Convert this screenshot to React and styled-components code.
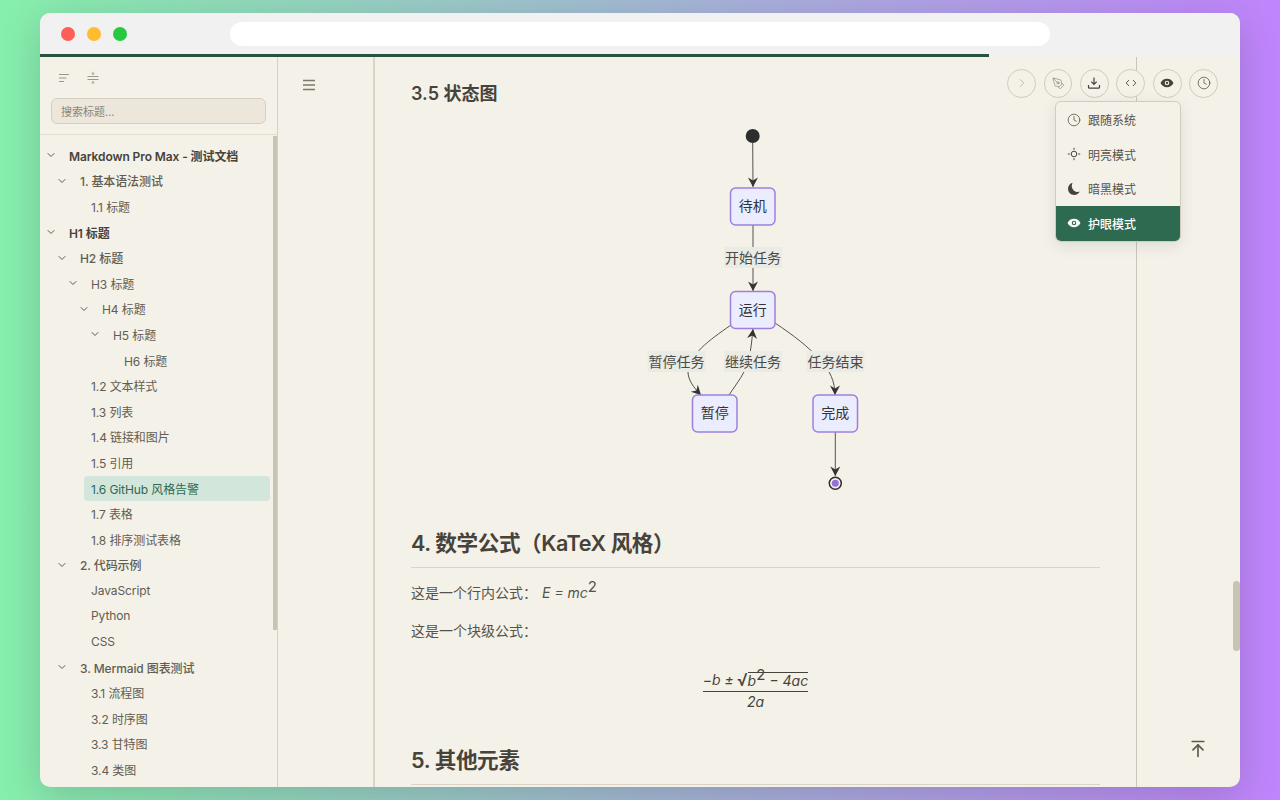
import React from 'react'
import styled, { createGlobalStyle } from 'styled-components'
import { ChevronRight, ChevronDown, Clock, PenTool, ArrowUpToLine } from 'lucide-react'

const FONT = `Inter, 'Noto Sans CJK SC', sans-serif`

const GlobalStyle = createGlobalStyle`
  html, body { margin: 0; height: 100%; overflow: hidden; }
  body {
    background: linear-gradient(90deg, #86efac 0%, #c084fc 100%);
    font-family: ${FONT};
  }
  * { box-sizing: border-box; }
`

const Page = styled.div`
  height: 100vh;
  padding: 13px 40px;
`

const Browser = styled.div`
  height: 774px;
  display: flex;
  flex-direction: column;
  position: relative;
  overflow: hidden;
  border-radius: 10px;
  background: #f4f1e8;
  box-shadow: 0 10px 40px rgba(0, 0, 0, 0.16);
`

const TitleBar = styled.div`
  height: 41px;
  flex-shrink: 0;
  display: flex;
  align-items: center;
  background: #f1f1f1;
  padding: 1px 190px 0 21px;
`

const Light = styled.span`
  width: 14px;
  height: 14px;
  border-radius: 50%;
  margin-right: 12px;
  background: ${(p) => p.$color};
`

const UrlBar = styled.div`
  flex: 1;
  height: 24px;
  margin-left: 91px;
  border-radius: 12px;
  background: #fff;
`

const ProgressTrack = styled.div`
  height: 3px;
  flex-shrink: 0;
  background: #f1f1ee;
`

const ProgressFill = styled.div`
  height: 100%;
  background: #27523e;
`

const Body = styled.div`
  flex: 1;
  min-height: 0;
  display: flex;
`

const Sidebar = styled.aside`
  width: 238px;
  flex-shrink: 0;
  display: flex;
  flex-direction: column;
  position: relative;
  border-right: 1px solid #d6d1c4;
`

const SidebarHead = styled.div`
  height: 78px;
  flex-shrink: 0;
  padding: 11px 11px 0;
  border-bottom: 1px solid #e2ddd0;
`

const SidebarTools = styled.div`
  display: flex;
  gap: 15px;
  padding-left: 6px;
  height: 20px;
  align-items: center;
  color: #9c978a;
`

const SearchBox = styled.div`
  width: 215px;
  height: 26px;
  margin-top: 10px;
  padding: 0 9px;
  display: flex;
  align-items: center;
  font-size: 11px;
  color: #8b8577;
  background: #ede6da;
  border: 1px solid #d5cfc0;
  border-radius: 6px;
`

const Tree = styled.div`
  flex: 1;
  min-height: 0;
  overflow: hidden;
  padding: 7.5px 7px 0 2px;
`

const SideThumb = styled.div`
  position: absolute;
  top: 79px;
  right: 0;
  width: 4px;
  height: 494px;
  background: #c9c3b4;
`

const Row = styled.div`
  height: 25.6px;
  display: flex;
  align-items: center;
  padding-left: ${(p) => p.$level * 11}px;
`

const Caret = styled.span`
  width: 18px;
  margin-right: 2px;
  flex-shrink: 0;
  display: flex;
  justify-content: center;
  color: #5e594d;
`

const RowLabel = styled.div`
  flex: 1;
  height: 25px;
  padding-left: 7px;
  display: flex;
  align-items: center;
  font-size: 12px;
  letter-spacing: -0.1px;
  white-space: nowrap;
  border-radius: 4px;
  font-weight: ${(p) => p.$weight};
  color: ${(p) => (p.$active ? '#2d6a4f' : p.$weight === 600 ? '#47433a' : '#625d51')};
  background: ${(p) => (p.$active ? '#d3e6dc' : 'transparent')};
`

const Gutter = styled.div`
  width: 97px;
  flex-shrink: 0;
  padding: 20px 0 0 23px;
  color: #7c786c;
  border-right: 2px solid #d9d4c7;
`

const Article = styled.main`
  width: 762px;
  flex-shrink: 0;
  padding: 0 36px;
  overflow: hidden;
  color: #47433a;
  border-right: 1px solid #c9c5b8;
`

const H3 = styled.h3`
  margin: 24px 0 0;
  font-size: 18px;
  line-height: 25px;
  font-weight: 600;
  color: #47433a;
`

const Diagram = styled.svg`
  display: block;
  margin-top: 14px;
`

const H2 = styled.h2`
  margin: ${(p) => p.$top}px 0 0;
  padding-bottom: 8px;
  font-size: 21.6px;
  letter-spacing: -0.4px;
  line-height: 31px;
  font-weight: 600;
  color: #47433a;
  border-bottom: 1px solid #d9d4c7;
`

const Para = styled.p`
  margin: ${(p) => p.$top}px 0 0;
  font-size: 14px;
  line-height: 24px;
  color: #57534a;
`

const InlineMath = styled.span`
  margin-left: 5px;
  font-style: italic;
  font-size: 14px;
`

const MathText = styled.span`
  font-style: italic;
  font-size: 14px;
`

const Radical = styled.span`
  font-size: 17px;
  line-height: 18px;
  margin-left: 3px;
`

const Sup = styled.sup`
  font-style: normal;
  font-size: 15px;
  line-height: 0;
  vertical-align: 6px;
`

const BlockMath = styled.div`
  margin-top: 28px;
  display: flex;
  justify-content: center;
`

const Fraction = styled.div`
  display: inline-flex;
  flex-direction: column;
  align-items: center;
  font-size: 14px;
  line-height: 18px;
  color: #47433a;
`

const Numerator = styled.div`
  display: flex;
  align-items: flex-end;
  white-space: nowrap;
  padding-bottom: 2px;
  border-bottom: 1px solid #47433a;
`

const Radicand = styled.span`
  border-top: 1px solid #47433a;
  line-height: 16px;
  font-style: italic;
`

const Denominator = styled.div`
  font-style: italic;
  padding-top: 1px;
`

const Toolbar = styled.div`
  position: absolute;
  top: 56px;
  right: 22px;
  display: flex;
  gap: 7.6px;
`

const RoundButton = styled.div`
  width: 28.8px;
  height: 28.8px;
  display: flex;
  align-items: center;
  justify-content: center;
  border-radius: 50%;
  background: #f4f1e8;
  border: 1px solid #d0cbbd;
  color: ${(p) => p.$color || '#47433a'};
`

const ThemeMenu = styled.div`
  position: absolute;
  top: 88.4px;
  right: 59px;
  width: 126px;
  overflow: hidden;
  background: #f4f1e8;
  border: 1px solid #d0cbbd;
  border-radius: 6px;
  box-shadow: 0 4px 16px rgba(0, 0, 0, 0.09);
`

const MenuItem = styled.div`
  height: 34.6px;
  display: flex;
  align-items: center;
  gap: 7px;
  padding-left: 11px;
  font-size: 12px;
  color: ${(p) => (p.$active ? '#fff' : '#57534a')};
  font-weight: ${(p) => (p.$active ? 500 : 400)};
  background: ${(p) => (p.$active ? '#2d6a4f' : 'transparent')};
`

const MenuIcon = styled.span`
  width: 14px;
  height: 14px;
  display: flex;
  align-items: center;
  justify-content: center;
  color: ${(p) => (p.$active ? '#fff' : '#47433a')};
`

const PageThumb = styled.div`
  position: absolute;
  top: 568px;
  right: 0;
  width: 7px;
  height: 70px;
  border-radius: 4px;
  background: #c9c3b4;
`

const BackTop = styled.div`
  position: absolute;
  right: 32px;
  bottom: 28px;
  color: #5e594d;
  display: flex;
`

const TREE = [
  [0, 'Markdown Pro Max - 测试文档', 1, 600],
  [1, '1. 基本语法测试', 1, 500],
  [2, '1.1 标题', 0, 400],
  [0, 'H1 标题', 1, 600],
  [1, 'H2 标题', 1, 500],
  [2, 'H3 标题', 1, 400],
  [3, 'H4 标题', 1, 400],
  [4, 'H5 标题', 1, 400],
  [5, 'H6 标题', 0, 400],
  [2, '1.2 文本样式', 0, 400],
  [2, '1.3 列表', 0, 400],
  [2, '1.4 链接和图片', 0, 400],
  [2, '1.5 引用', 0, 400],
  [2, '1.6 GitHub 风格告警', 0, 400, true],
  [2, '1.7 表格', 0, 400],
  [2, '1.8 排序测试表格', 0, 400],
  [1, '2. 代码示例', 1, 500],
  [2, 'JavaScript', 0, 400],
  [2, 'Python', 0, 400],
  [2, 'CSS', 0, 400],
  [1, '3. Mermaid 图表测试', 1, 500],
  [2, '3.1 流程图', 0, 400],
  [2, '3.2 时序图', 0, 400],
  [2, '3.3 甘特图', 0, 400],
  [2, '3.4 类图', 0, 400],
]

const CollapseIcon = () => (
  <svg width="14" height="14" viewBox="0 0 14 14" fill="none" stroke="currentColor" strokeWidth="1">
    <path d="M2 3.5h10M2 7h7.5M2 10.5h5" />
  </svg>
)

const ExpandIcon = () => (
  <svg width="14" height="14" viewBox="0 0 14 14" fill="none" stroke="currentColor" strokeWidth="1">
    <path d="M1.5 5.5h11M1.5 8.5h11" />
    <path d="M7 .8v2.6M5.6 2.4 7 3.6l1.4-1.2M7 13.2v-2.6M5.6 11.6 7 10.4l1.4 1.2" strokeWidth=".9" />
  </svg>
)

const DownloadIcon = () => (
  <svg width="14" height="14" viewBox="0 0 14 14" fill="none" stroke="currentColor" strokeWidth="1.2">
    <path d="M7 1.5v6.6M4.3 5.6 7 8.3l2.7-2.7M1.5 9v2.2c0 .6.4 1 1 1h9c.6 0 1-.4 1-1V9" />
  </svg>
)

const CodeIcon = () => (
  <svg width="12" height="12" viewBox="0 0 12 12" fill="none" stroke="currentColor" strokeWidth="1">
    <path d="M4 3 1.2 6 4 9M8 3l2.8 3L8 9" />
  </svg>
)

const EyeIcon = ({ size = 14 }) => (
  <svg width={size} height={size} viewBox="0 0 16 16" fill="currentColor">
    <path
      fillRule="evenodd"
      d="M.6 8C2 5 4.700 3.200 8 3.200S14 5 15.400 8C14 11 11.300 12.800 8 12.800S2 11 .6 8zM8 5.400a2.600 2.600 0 1 0 0 5.200 2.600 2.600 0 0 0 0-5.200z"
    />
    <circle cx="8" cy="8" r="1.300" />
  </svg>
)

const SunIcon = () => (
  <svg width="14" height="14" viewBox="0 0 14 14" fill="none" stroke="currentColor" strokeWidth="1">
    <circle cx="7" cy="7" r="2.800" />
    <path d="M7 .8v2M7 11.200v2M.8 7h2M11.200 7h2" />
  </svg>
)

const MoonIcon = () => (
  <svg width="14" height="14" viewBox="0 0 14 14" fill="currentColor">
    <path d="M5.600.8C2.900 1.500 1 3.900 1 6.800c0 3.400 2.800 6.200 6.200 6.200 2.400 0 4.500-1.400 5.500-3.400-.6.200-1.200.3-1.900.3-3.300 0-6-2.700-6-6 0-1.100.3-2.200.8-3.100z" />
  </svg>
)

const HamburgerIcon = () => (
  <svg width="16" height="16" viewBox="0 0 16 16" fill="none" stroke="currentColor" strokeWidth="1.400">
    <path d="M2 3.500h12M2 8h12M2 12.500h12" />
  </svg>
)

const StateNode = ({ x, y, label }) => (
  <g>
    <rect x={x} y={y} width="44.500" height="37" rx="5" fill="#ececff" stroke="#9d80dc" strokeWidth="1.500" />
    <text x={x + 22.25} y={y + 23} textAnchor="middle" fontSize="14" fill="#333">
      {label}
    </text>
  </g>
)

const EdgeLabel = ({ x, y, label }) => (
  <g>
    <rect x={x} y={y} width="58" height="21" fill="#ebebe5" />
    <text x={x + 29} y={y + 15.500} textAnchor="middle" fontSize="14" fill="#4a4a46">
      {label}
    </text>
  </g>
)

const StateDiagram = () => (
  <Diagram viewBox="411 120 689 380" width="689" height="380" fontFamily={FONT}>
    <defs>
      <marker id="tip" viewBox="0 0 12 12" refX="11" refY="6" markerWidth="12" markerHeight="12" orient="auto">
        <path d="M1.500 1 11 6 1.500 11 4.500 6z" fill="#333" />
      </marker>
    </defs>
    <g fill="none" stroke="#55534c" strokeWidth="1">
      <path d="M752.700 143 753 187" markerEnd="url(#tip)" />
      <path d="M753 225V291" markerEnd="url(#tip)" />
      <path d="M731 325C708 341 690 354 688 372c0 8 6 16 13 23" markerEnd="url(#tip)" />
      <path d="M729 395c8-12 17-23 20-36 2-10 3-20 4-30" markerEnd="url(#tip)" />
      <path d="M775 323c18 12 34 24 45 37 10 10 15 22 15 35" markerEnd="url(#tip)" />
      <path d="M835.300 432V476" markerEnd="url(#tip)" />
    </g>
    <circle cx="752.700" cy="136" r="7" fill="#2d2d2d" />
    <StateNode x={730.5} y={188} label="待机" />
    <EdgeLabel x={724} y={247} label="开始任务" />
    <StateNode x={730.5} y={291.5} label="运行" />
    <EdgeLabel x={647.5} y={351} label="暂停任务" />
    <EdgeLabel x={724} y={351} label="继续任务" />
    <EdgeLabel x={806.5} y={351} label="任务结束" />
    <StateNode x={692.5} y={395} label="暂停" />
    <StateNode x={813} y={395} label="完成" />
    <circle cx="835.300" cy="483.300" r="6" fill="#f4f1e8" stroke="#2d2d2d" strokeWidth="1.500" />
    <circle cx="835.300" cy="483.300" r="3.500" fill="#9370db" />
  </Diagram>
)

export default function App() {
  return (
    <Page>
      <GlobalStyle />
      <Browser>
        <TitleBar>
          <Light $color="#ff5f57" />
          <Light $color="#febc2e" />
          <Light $color="#28c840" />
          <UrlBar />
        </TitleBar>
        <ProgressTrack>
          <ProgressFill style={{ width: '79.1%' }} />
        </ProgressTrack>
        <Body>
          <Sidebar>
            <SidebarHead>
              <SidebarTools>
                <CollapseIcon />
                <ExpandIcon />
              </SidebarTools>
              <SearchBox>搜索标题...</SearchBox>
            </SidebarHead>
            <Tree>
              {TREE.map(([level, label, caret, weight, active]) => (
                <Row key={label} $level={level}>
                  <Caret>{caret ? <ChevronDown size={12} strokeWidth={2} /> : null}</Caret>
                  <RowLabel $weight={weight} $active={active}>
                    {label}
                  </RowLabel>
                </Row>
              ))}
            </Tree>
            <SideThumb />
          </Sidebar>
          <Gutter>
            <HamburgerIcon />
          </Gutter>
          <Article>
            <H3>3.5 状态图</H3>
            <StateDiagram />
            <H2 $top={28}>4. 数学公式（KaTeX 风格）</H2>
            <Para $top={13}>
              这是一个行内公式：
              <InlineMath>
                E = mc<Sup>2</Sup>
              </InlineMath>
            </Para>
            <Para $top={14}>这是一个块级公式：</Para>
            <BlockMath>
              <Fraction>
                <Numerator>
                  <MathText>−b ±</MathText>
                  <Radical>√</Radical>
                  <Radicand>
                    b<Sup>2</Sup> − 4ac
                  </Radicand>
                </Numerator>
                <Denominator>2a</Denominator>
              </Fraction>
            </BlockMath>
            <H2 $top={34}>5. 其他元素</H2>
          </Article>
        </Body>
        <Toolbar>
          <RoundButton $color="#9a958a">
            <ChevronRight size={14} strokeWidth={1} />
          </RoundButton>
          <RoundButton $color="#6f6a5e">
            <PenTool size={13} strokeWidth={1} />
          </RoundButton>
          <RoundButton>
            <DownloadIcon />
          </RoundButton>
          <RoundButton $color="#625d51">
            <CodeIcon />
          </RoundButton>
          <RoundButton>
            <EyeIcon />
          </RoundButton>
          <RoundButton>
            <Clock size={14} strokeWidth={1.2} />
          </RoundButton>
        </Toolbar>
        <ThemeMenu>
          <MenuItem>
            <MenuIcon>
              <Clock size={14} strokeWidth={1.2} />
            </MenuIcon>
            跟随系统
          </MenuItem>
          <MenuItem>
            <MenuIcon>
              <SunIcon />
            </MenuIcon>
            明亮模式
          </MenuItem>
          <MenuItem>
            <MenuIcon>
              <MoonIcon />
            </MenuIcon>
            暗黑模式
          </MenuItem>
          <MenuItem $active>
            <MenuIcon $active>
              <EyeIcon />
            </MenuIcon>
            护眼模式
          </MenuItem>
        </ThemeMenu>
        <PageThumb />
        <BackTop>
          <ArrowUpToLine size={20} strokeWidth={2} />
        </BackTop>
      </Browser>
    </Page>
  )
}
